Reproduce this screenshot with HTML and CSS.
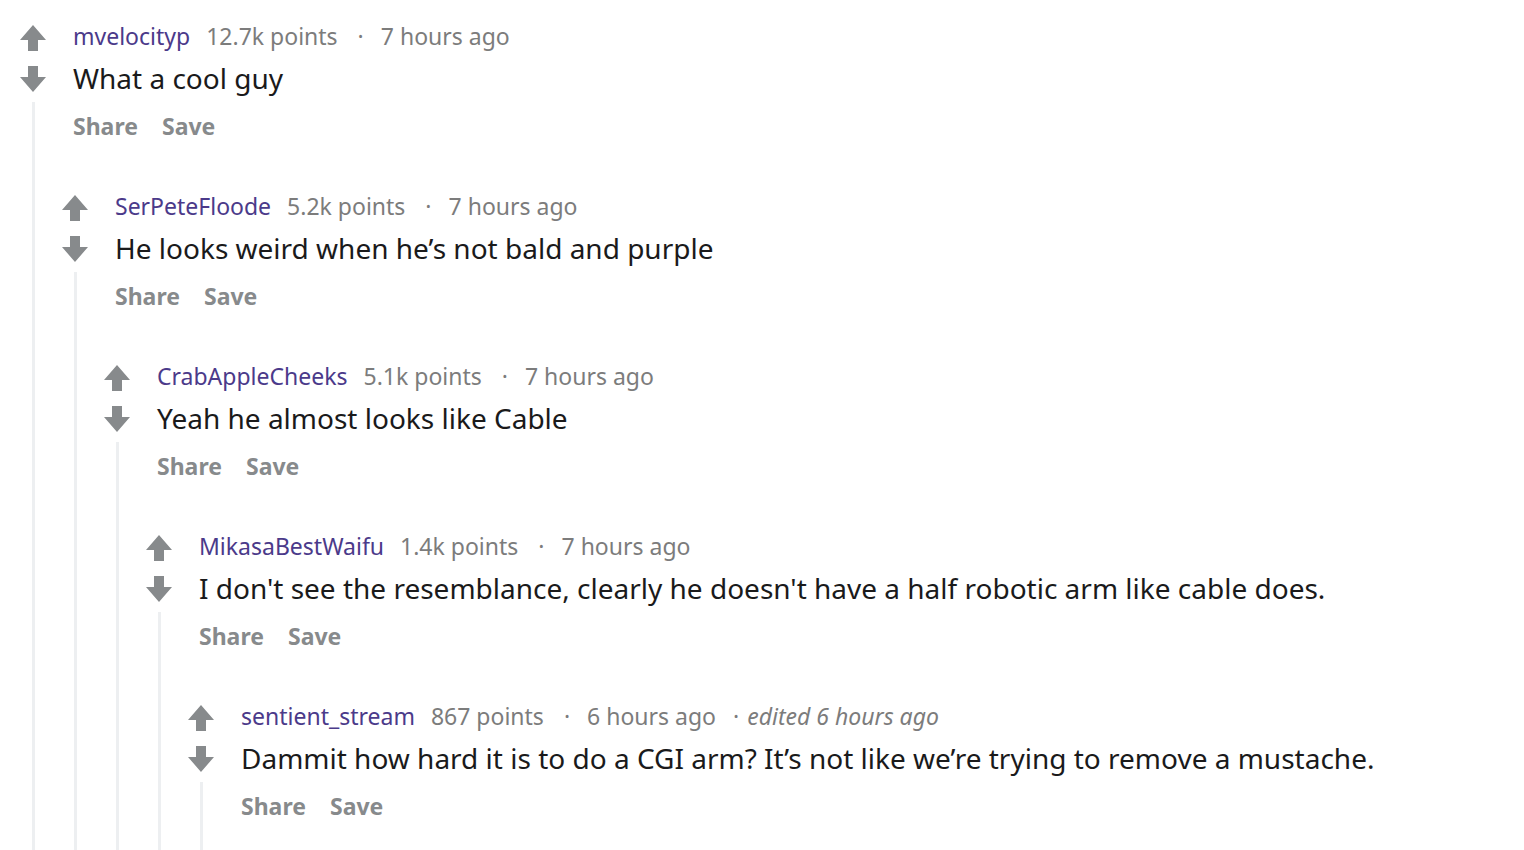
FILE: index.html
```html
<!DOCTYPE html>
<html>
<head>
<meta charset="utf-8">
<link rel="stylesheet" href="styles.css">
</head>
<body>
<div class="thread">
  <div class="comment">
    <div class="rail">
      <svg class="vote" viewBox="0 0 26 26"><path d="M13 0 L26 15 L18 15 L18 26 L8 26 L8 15 L0 15 Z"/></svg>
      <svg class="vote down" viewBox="0 0 26 26"><path d="M13 26 L26 11 L18 11 L18 0 L8 0 L8 11 L0 11 Z"/></svg>
      <div class="line"></div>
    </div>
    <div class="main">
      <div class="head"><span class="user">mvelocityp</span><span class="meta">12.7k points</span><span class="dot">·</span><span class="meta">7 hours ago</span></div>
      <div class="body">What a cool guy</div>
      <div class="actions"><span>Share</span><span>Save</span></div>
      <div class="children">
        <div class="comment">
          <div class="rail">
            <svg class="vote" viewBox="0 0 26 26"><path d="M13 0 L26 15 L18 15 L18 26 L8 26 L8 15 L0 15 Z"/></svg>
            <svg class="vote down" viewBox="0 0 26 26"><path d="M13 26 L26 11 L18 11 L18 0 L8 0 L8 11 L0 11 Z"/></svg>
            <div class="line"></div>
          </div>
          <div class="main">
            <div class="head"><span class="user">SerPeteFloode</span><span class="meta">5.2k points</span><span class="dot">·</span><span class="meta">7 hours ago</span></div>
            <div class="body">He looks weird when he’s not bald and purple</div>
            <div class="actions"><span>Share</span><span>Save</span></div>
            <div class="children">
              <div class="comment">
                <div class="rail">
                  <svg class="vote" viewBox="0 0 26 26"><path d="M13 0 L26 15 L18 15 L18 26 L8 26 L8 15 L0 15 Z"/></svg>
                  <svg class="vote down" viewBox="0 0 26 26"><path d="M13 26 L26 11 L18 11 L18 0 L8 0 L8 11 L0 11 Z"/></svg>
                  <div class="line"></div>
                </div>
                <div class="main">
                  <div class="head"><span class="user">CrabAppleCheeks</span><span class="meta">5.1k points</span><span class="dot">·</span><span class="meta">7 hours ago</span></div>
                  <div class="body">Yeah he almost looks like Cable</div>
                  <div class="actions"><span>Share</span><span>Save</span></div>
                  <div class="children">
                    <div class="comment">
                      <div class="rail">
                        <svg class="vote" viewBox="0 0 26 26"><path d="M13 0 L26 15 L18 15 L18 26 L8 26 L8 15 L0 15 Z"/></svg>
                        <svg class="vote down" viewBox="0 0 26 26"><path d="M13 26 L26 11 L18 11 L18 0 L8 0 L8 11 L0 11 Z"/></svg>
                        <div class="line"></div>
                      </div>
                      <div class="main">
                        <div class="head"><span class="user">MikasaBestWaifu</span><span class="meta">1.4k points</span><span class="dot">·</span><span class="meta">7 hours ago</span></div>
                        <div class="body">I don't see the resemblance, clearly he doesn't have a half robotic arm like cable does.</div>
                        <div class="actions"><span>Share</span><span>Save</span></div>
                        <div class="children">
                          <div class="comment">
                            <div class="rail">
                              <svg class="vote" viewBox="0 0 26 26"><path d="M13 0 L26 15 L18 15 L18 26 L8 26 L8 15 L0 15 Z"/></svg>
                              <svg class="vote down" viewBox="0 0 26 26"><path d="M13 26 L26 11 L18 11 L18 0 L8 0 L8 11 L0 11 Z"/></svg>
                              <div class="line"></div>
                            </div>
                            <div class="main">
                              <div class="head"><span class="user">sentient_stream</span><span class="meta">867 points</span><span class="dot">·</span><span class="meta">6 hours ago</span><span class="edited"><span class="edot">·</span>edited 6 hours ago</span></div>
                              <div class="body">Dammit how hard it is to do a CGI arm? It’s not like we’re trying to remove a mustache.</div>
                              <div class="actions"><span>Share</span><span>Save</span></div>
                              <div class="children"></div>
                            </div>
                          </div>
                        </div>
                      </div>
                    </div>
                  </div>
                </div>
              </div>
            </div>
          </div>
        </div>
      </div>
    </div>
  </div>
</div>
</body>
</html>
```

FILE: styles.css
```css
html, body {
  margin: 0;
  padding: 0;
  background: #ffffff;
  overflow: hidden;
  height: 850px;
}
body {
  font-family: "Noto Sans", "Open Sans", sans-serif;
}
.thread {
  padding: 21px 0 0 20px;
}
.comment {
  display: flex;
  align-items: stretch;
}
.rail {
  width: 42px;
  flex: none;
  display: flex;
  flex-direction: column;
  align-items: flex-start;
  padding-top: 4px;
}
.vote {
  width: 26px;
  height: 26px;
  fill: #878a8c;
  display: block;
}
.vote.down {
  margin-top: 15px;
}
.line {
  flex: 1;
  width: 3px;
  margin-left: 12px;
  margin-top: 10px;
  background: #edeff1;
  min-height: 1000px;
}
.main {
  flex: 1;
  min-width: 0;
}
.head, .body, .actions {
  padding-left: 11px;
  white-space: nowrap;
}
.head {
  height: 30px;
  line-height: 30px;
  font-size: 23px;
  display: flex;
  align-items: baseline;
}
.user {
  color: #4b3a8a;
  margin-right: 16px;
}
.meta {
  color: #7c7c7c;
}
.dot {
  color: #7c7c7c;
  margin: 0 17px 0 20px;
}
.edited {
  color: #7c7c7c;
  font-style: italic;
  margin-left: 17px;
}
.edot {
  font-style: normal;
  margin-right: 8px;
}
.body {
  margin-top: 9px;
  height: 36px;
  line-height: 36px;
  font-size: 28px;
  color: #1a1a1b;
}
.actions {
  margin-top: 15px;
  height: 30px;
  line-height: 30px;
  font-size: 23px;
  font-weight: 700;
  color: #878a8c;
  display: flex;
  gap: 24px;
  padding-bottom: 50px;
}
```
